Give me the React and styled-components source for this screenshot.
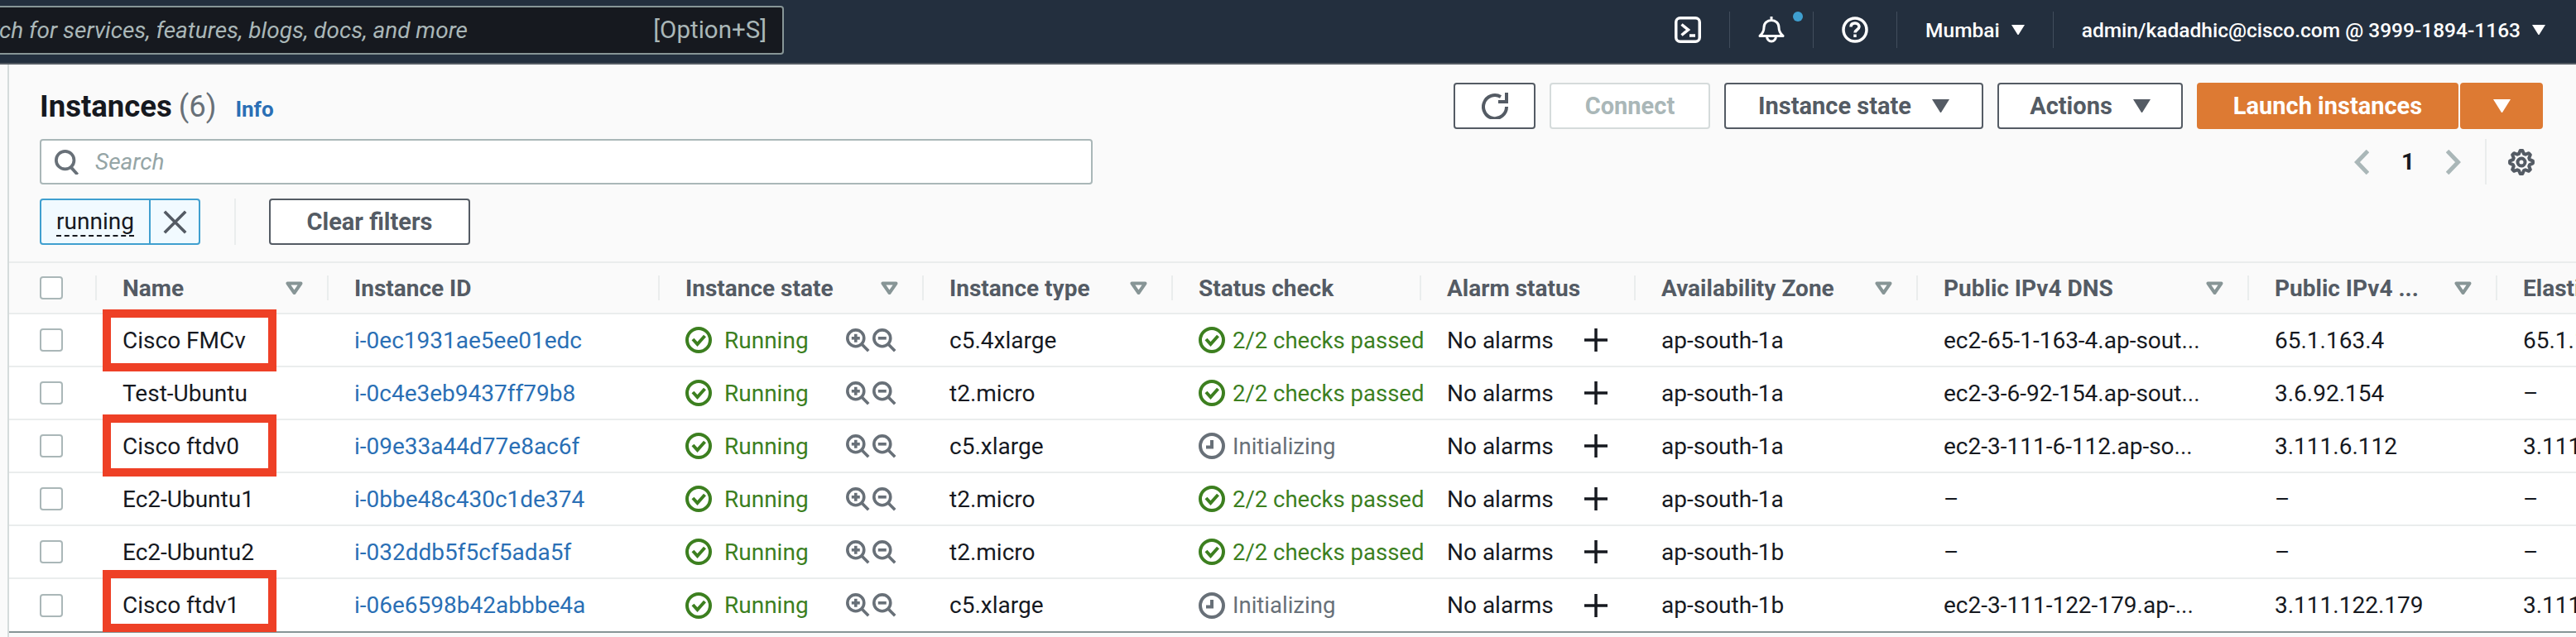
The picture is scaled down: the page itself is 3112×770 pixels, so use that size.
import React from 'react';
import styled, { createGlobalStyle } from 'styled-components';

const GlobalStyle = createGlobalStyle`
  html, body {
    margin: 0;
    padding: 0;
    background: #fafafa;
    overflow: hidden;
  }
  * {
    box-sizing: border-box;
  }
  body {
    font-family: Roboto, "Noto Sans", "Liberation Sans", sans-serif;
    color: #16191f;
  }
`;

const Page = styled.div`
  width: 3112px;
  height: 770px;
  overflow: hidden;
  background: #fafafa;
`;

const TopNav = styled.header`
  height: 78px;
  background: #232f3e;
  border-bottom: 2px solid #545b64;
  display: flex;
  align-items: center;
  padding-right: 37px;
  color: #fff;
`;

const GlobalSearch = styled.div`
  width: 947px;
  height: 59px;
  margin-top: -4px;
  background: #16191f;
  border: 2px solid #879596;
  border-left: 0;
  border-radius: 0 4px 4px 0;
  display: flex;
  justify-content: space-between;
  align-items: center;
  padding-right: 19px;
  color: #aab7b8;
  font-size: 28px;
  overflow: hidden;
`;

const SearchHint = styled.span`
  width: 565px;
  display: flex;
  justify-content: flex-end;
  font-style: italic;
  white-space: nowrap;
`;

const Shortcut = styled.span`
  font-size: 29.5px;
`;

const NavRight = styled.div`
  margin-left: auto;
  display: flex;
  align-items: center;
  height: 44px;
  margin-top: -4px;
  font-size: 24.5px;
  font-weight: 500;
`;

const NavItem = styled.div`
  height: 44px;
  display: flex;
  align-items: center;
  gap: 14px;
  padding: 0 ${p => (p.$last ? 0 : 34)}px 0 34px;
  border-left: ${p => (p.$first ? 'none' : '1px solid #414d5c')};
  white-space: nowrap;
  position: relative;
`;

const NotifyDot = styled.span`
  position: absolute;
  top: 0;
  right: 12px;
  width: 12px;
  height: 12px;
  border-radius: 50%;
  background: #3f9fcf;
`;

const Content = styled.main`
  margin-left: 9px;
  height: 692px;
  border-left: 2px solid #d5dbdb;
  display: flex;
  flex-direction: column;
`;

const Toolbar = styled.section`
  height: 238px;
  padding: 22px 40px 0 37px;
  display: flex;
  flex-direction: column;
`;

const TitleRow = styled.div`
  display: flex;
  align-items: center;
  justify-content: space-between;
  height: 56px;
`;

const Title = styled.h1`
  margin: 0;
  font-size: 36.5px;
  font-weight: 700;
  color: #16191f;
  display: flex;
  align-items: baseline;
`;

const Count = styled.span`
  font-weight: 400;
  color: #687078;
  margin-left: 8px;
`;

const InfoLink = styled.a`
  font-size: 26px;
  font-weight: 700;
  color: #2a6fb5;
  margin-left: 23px;
`;

const Actions = styled.div`
  display: flex;
  gap: 17px;
  height: 56px;
`;

const Button = styled.button`
  height: 56px;
  width: ${p => p.$w}px;
  padding: 0;
  display: flex;
  align-items: center;
  justify-content: center;
  gap: 25px;
  font-family: inherit;
  font-size: 29px;
  font-weight: 700;
  background: #fff;
  color: ${p => (p.disabled ? '#aab7b8' : '#545b64')};
  border: 2px solid ${p => (p.disabled ? '#d5dbdb' : '#545b64')};
  border-radius: 4px;
`;

const PrimaryButton = styled(Button)`
  background: #dd7a33;
  border-color: #dd7a33;
  color: #fff;
`;

const SplitButton = styled.div`
  display: flex;
  gap: 2px;
`;

const FilterRow = styled.div`
  display: flex;
  justify-content: space-between;
  margin-top: 12px;
`;

const SearchField = styled.div`
  width: 1272px;
  height: 55px;
  background: #fff;
  border: 2px solid #aab7b8;
  border-radius: 4px;
  display: flex;
  align-items: center;
  gap: 19px;
  padding-left: 16px;
  color: #687078;
`;

const SearchPlaceholder = styled.span`
  font-size: 28px;
  font-style: italic;
  color: #95a5a6;
`;

const Pager = styled.div`
  display: flex;
  align-items: center;
  height: 55px;
  margin-right: 10px;
`;

const PageNumber = styled.span`
  width: 16px;
  font-size: 28px;
  font-weight: 700;
  margin: 0 38px 0 39px;
`;

const PagerSettings = styled.div`
  height: 55px;
  margin-left: 29px;
  padding-left: 26px;
  border-left: 2px solid #eaeded;
  display: flex;
  align-items: center;
  color: #545b64;
`;

const TokenRow = styled.div`
  display: flex;
  align-items: center;
  margin-top: 17px;
  height: 56px;
`;

const Token = styled.div`
  width: 194px;
  height: 56px;
  display: flex;
  background: #f1faff;
  border: 2px solid #3f9fcf;
  border-radius: 4px;
`;

const TokenLabel = styled.span`
  width: 132px;
  display: flex;
  align-items: center;
  justify-content: center;
  border-right: 2px solid #3f9fcf;
  font-size: 28px;
  color: #16191f;
  span {
    border-bottom: 2px dashed #16191f;
    line-height: 33px;
  }
`;

const TokenClose = styled.span`
  flex: 1;
  display: flex;
  align-items: center;
  justify-content: center;
  color: #545b64;
`;

const TokenDivider = styled.span`
  width: 2px;
  height: 56px;
  background: #eaeded;
  margin: 0 40px 0 41px;
`;

const Table = styled.div`
  border-top: 2px solid #eaeded;
  border-bottom: 2px solid #879596;
  background: #fff;
  display: flex;
  flex-direction: column;
`;

const columns = '104px 280px 400px 319px 301px 300px 259px 341px 400px 300px 97px';

const HeaderRow = styled.div`
  display: grid;
  grid-template-columns: ${columns};
  height: 62px;
  background: #fafafa;
  border-bottom: 2px solid #eaeded;
  align-items: center;
`;

const HeaderCell = styled.div`
  height: 30px;
  padding: 0 ${p => (p.$last ? 0 : 29)}px 0 31px;
  border-left: 2px solid #eaeded;
  display: flex;
  align-items: center;
  justify-content: space-between;
  font-size: 28px;
  font-weight: 700;
  color: #545b64;
  white-space: nowrap;
  overflow: hidden;
`;

const Row = styled.div`
  display: grid;
  grid-template-columns: ${columns};
  height: ${p => (p.$last ? 63 : 64)}px;
  border-bottom: ${p => (p.$last ? 'none' : '2px solid #eaeded')};
  align-items: stretch;
`;

const CheckCell = styled.div`
  padding-left: 37px;
  display: flex;
  align-items: center;
`;

const CheckBox = styled.span`
  display: block;
  width: 28px;
  height: 28px;
  background: #fff;
  border: 2px solid #aab7b8;
  border-radius: 4px;
`;

const Cell = styled.div`
  padding-left: 33px;
  display: flex;
  align-items: center;
  font-size: 28px;
  color: #16191f;
  white-space: nowrap;
  overflow: hidden;
`;

const NameCell = styled(Cell)`
  position: relative;
  overflow: visible;
`;

const Highlight = styled.span`
  position: absolute;
  left: 9px;
  top: ${p => p.$top}px;
  width: 210px;
  height: 75px;
  border: 10px solid #ee4026;
  pointer-events: none;
`;

const IdLink = styled.a`
  color: #2a6fb5;
`;

const StatusCell = styled(Cell)`
  gap: 9px;
  font-size: 27.5px;
  overflow: visible;
  color: ${p => p.$color};
`;

const StateCell = styled(StatusCell)`
  gap: 15px;
  font-size: 28px;
`;

const ZoomIcons = styled.span`
  margin-left: 30px;
  display: flex;
  gap: 3px;
  color: #687078;
`;

const AlarmCell = styled(Cell)`
  gap: 37px;
`;

const Svg = ({ size = 32, sw = 4, children, ...rest }) => (
  <svg width={size} height={size} viewBox="0 0 32 32" fill="none" stroke="currentColor" strokeWidth={sw} {...rest}>
    {children}
  </svg>
);

const Caret = ({ width = 16, color = '#fff' }) => (
  <svg width={width} height={width * 0.8} viewBox="0 0 20 16">
    <path d="M0 0h20L10 16z" fill={color} />
  </svg>
);

const SortIcon = () => (
  <svg width="21" height="17" viewBox="0 0 21 17" style={{ flexShrink: 0 }}>
    <path d="M2.500 2.500h16l-8 11.500z" fill="#fff" stroke="#879596" strokeWidth="4" strokeLinejoin="round" />
  </svg>
);

const CircleCheck = () => (
  <Svg style={{ flexShrink: 0 }}>
    <circle cx="16" cy="16" r="14" />
    <path d="M9 15l5.500 6L23.500 11" />
  </Svg>
);

const CircleClock = () => (
  <Svg style={{ flexShrink: 0 }}>
    <circle cx="16" cy="16" r="14" />
    <path d="M16 9v8.500H9" />
  </Svg>
);

const ZoomGlass = ({ plus }) => (
  <Svg size={29}>
    <circle cx="13" cy="13" r="11" />
    <path d="M21 21l9 9" />
    <path d="M7.500 13h11" />
    {plus && <path d="M13 7.500v11" />}
  </Svg>
);

const Refresh = () => (
  <Svg>
    <path d="M23 5A14 14 0 1 0 30 17" />
    <path d="M28 0h4v13H20V9h8z" fill="currentColor" stroke="none" />
  </Svg>
);

// eight teeth around the hub, alternating outer and inner radius
const gearPoints = Array.from({ length: 32 }, (_, i) => {
  const step = i % 4;
  const r = step === 0 || step === 1 ? 14 : 10.5;
  const a = ((i - 0.5) / 32) * Math.PI * 2;
  return `${(16 + r * Math.cos(a)).toFixed(2)},${(16 + r * Math.sin(a)).toFixed(2)}`;
}).join(' ');

const Gear = () => (
  <Svg>
    <circle cx="16" cy="16" r="4.500" />
    <polygon points={gearPoints} strokeLinejoin="round" />
  </Svg>
);

const SearchIcon = () => (
  <Svg size={30}>
    <circle cx="13.500" cy="13.500" r="11.500" />
    <path d="M20.500 22l9 10" />
  </Svg>
);

const Chevron = ({ dir }) => (
  <svg width="18" height="30" viewBox="0 0 18 30" fill="none" stroke="#aab7b8" strokeWidth="5">
    <path d={dir === 'left' ? 'M16.500 1.500L3.500 15l13 13.500' : 'M1.500 1.500L14.500 15l-13 13.500'} />
  </svg>
);

const Close = () => (
  <Svg size={29}>
    <path d="M2 2l28 28M30 2L2 30" />
  </Svg>
);

const Plus = () => (
  <Svg size={28}>
    <path d="M16 0v32M0 16h32" />
  </Svg>
);

const TerminalIcon = () => (
  <Svg sw={3.500}>
    <rect x="1.750" y="1.750" width="28.500" height="28.500" rx="5" />
    <path d="M8.500 9.500l8 6.500-8 6.500M18 23h7" />
  </Svg>
);

const BellIcon = () => (
  <Svg sw={3}>
    <path d="M16 0v4M2 23.500c4-3.500 5-6.500 5-10.500 0-5 4-8.500 9-8.500s9 3.500 9 8.500c0 4 1 7 5 10.500z" strokeLinejoin="round" />
    <path d="M10.500 24a5.500 6 0 0 0 11 0" />
  </Svg>
);

const HelpIcon = () => (
  <Svg sw={3.500}>
    <circle cx="16" cy="16" r="14" />
    <path d="M11 12.500C11 9.500 13 8 16 8s5 1.800 5 4.300c0 3.700-5 3.700-5 7.200M16 21.500v3.500" />
  </Svg>
);

const HEADERS = [
  ['Name', true],
  ['Instance ID', false],
  ['Instance state', true],
  ['Instance type', true],
  ['Status check', false],
  ['Alarm status', false],
  ['Availability Zone', true],
  ['Public IPv4 DNS', true],
  ['Public IPv4 ...', true],
];

const INSTANCES = [
  { name: 'Cisco FMCv', id: 'i-0ec1931ae5ee01edc', type: 'c5.4xlarge', ok: true, az: 'ap-south-1a', dns: 'ec2-65-1-163-4.ap-sout...', ip: '65.1.163.4', eip: '65.1.163.4', mark: -6 },
  { name: 'Test-Ubuntu', id: 'i-0c4e3eb9437ff79b8', type: 't2.micro', ok: true, az: 'ap-south-1a', dns: 'ec2-3-6-92-154.ap-sout...', ip: '3.6.92.154', eip: '–' },
  { name: 'Cisco ftdv0', id: 'i-09e33a44d77e8ac6f', type: 'c5.xlarge', ok: false, az: 'ap-south-1a', dns: 'ec2-3-111-6-112.ap-so...', ip: '3.111.6.112', eip: '3.111.6.112', mark: -7 },
  { name: 'Ec2-Ubuntu1', id: 'i-0bbe48c430c1de374', type: 't2.micro', ok: true, az: 'ap-south-1a', dns: '–', ip: '–', eip: '–' },
  { name: 'Ec2-Ubuntu2', id: 'i-032ddb5f5cf5ada5f', type: 't2.micro', ok: true, az: 'ap-south-1b', dns: '–', ip: '–', eip: '–' },
  { name: 'Cisco ftdv1', id: 'i-06e6598b42abbbe4a', type: 'c5.xlarge', ok: false, az: 'ap-south-1b', dns: 'ec2-3-111-122-179.ap-...', ip: '3.111.122.179', eip: '3.111.122.179', mark: -11 },
];

export default function App() {
  return (
    <Page>
      <GlobalStyle />
      <TopNav>
        <GlobalSearch>
          <SearchHint>Search for services, features, blogs, docs, and more</SearchHint>
          <Shortcut>[Option+S]</Shortcut>
        </GlobalSearch>
        <NavRight>
          <NavItem $first><TerminalIcon /></NavItem>
          <NavItem><BellIcon /><NotifyDot /></NavItem>
          <NavItem><HelpIcon /></NavItem>
          <NavItem>Mumbai <Caret /></NavItem>
          <NavItem $last>admin/kadadhic@cisco.com @ 3999-1894-1163 <Caret /></NavItem>
        </NavRight>
      </TopNav>
      <Content>
        <Toolbar>
          <TitleRow>
            <Title>Instances<Count>(6)</Count><InfoLink>Info</InfoLink></Title>
            <Actions>
              <Button $w={99}><Refresh /></Button>
              <Button $w={194} disabled>Connect</Button>
              <Button $w={313}>Instance state <Caret width={21} color="#545b64" /></Button>
              <Button $w={224}>Actions <Caret width={21} color="#545b64" /></Button>
              <SplitButton>
                <PrimaryButton $w={316}>Launch instances</PrimaryButton>
                <PrimaryButton $w={100}><Caret width={21} /></PrimaryButton>
              </SplitButton>
            </Actions>
          </TitleRow>
          <FilterRow>
            <SearchField><SearchIcon /><SearchPlaceholder>Search</SearchPlaceholder></SearchField>
            <Pager>
              <Chevron dir="left" />
              <PageNumber>1</PageNumber>
              <Chevron dir="right" />
              <PagerSettings><Gear /></PagerSettings>
            </Pager>
          </FilterRow>
          <TokenRow>
            <Token>
              <TokenLabel><span>running</span></TokenLabel>
              <TokenClose><Close /></TokenClose>
            </Token>
            <TokenDivider />
            <Button $w={243}>Clear filters</Button>
          </TokenRow>
        </Toolbar>
        <Table>
          <HeaderRow>
            <CheckCell><CheckBox /></CheckCell>
            {HEADERS.map(([label, sort]) => (
              <HeaderCell key={label}>{label}{sort && <SortIcon />}</HeaderCell>
            ))}
            <HeaderCell $last>Elastic</HeaderCell>
          </HeaderRow>
          {INSTANCES.map((it, i) => (
            <Row key={it.id} $last={i === INSTANCES.length - 1}>
              <CheckCell><CheckBox /></CheckCell>
              <NameCell>{it.name}{it.mark && <Highlight $top={it.mark} />}</NameCell>
              <Cell><IdLink>{it.id}</IdLink></Cell>
              <StateCell $color="#3c7f1f">
                <CircleCheck />Running
                <ZoomIcons><ZoomGlass plus /><ZoomGlass /></ZoomIcons>
              </StateCell>
              <Cell>{it.type}</Cell>
              {it.ok
                ? <StatusCell $color="#3c7f1f"><CircleCheck />2/2 checks passed</StatusCell>
                : <StatusCell $color="#687078"><CircleClock />Initializing</StatusCell>}
              <AlarmCell>No alarms <Plus /></AlarmCell>
              <Cell>{it.az}</Cell>
              <Cell>{it.dns}</Cell>
              <Cell>{it.ip}</Cell>
              <Cell>{it.eip}</Cell>
            </Row>
          ))}
        </Table>
      </Content>
    </Page>
  );
}
